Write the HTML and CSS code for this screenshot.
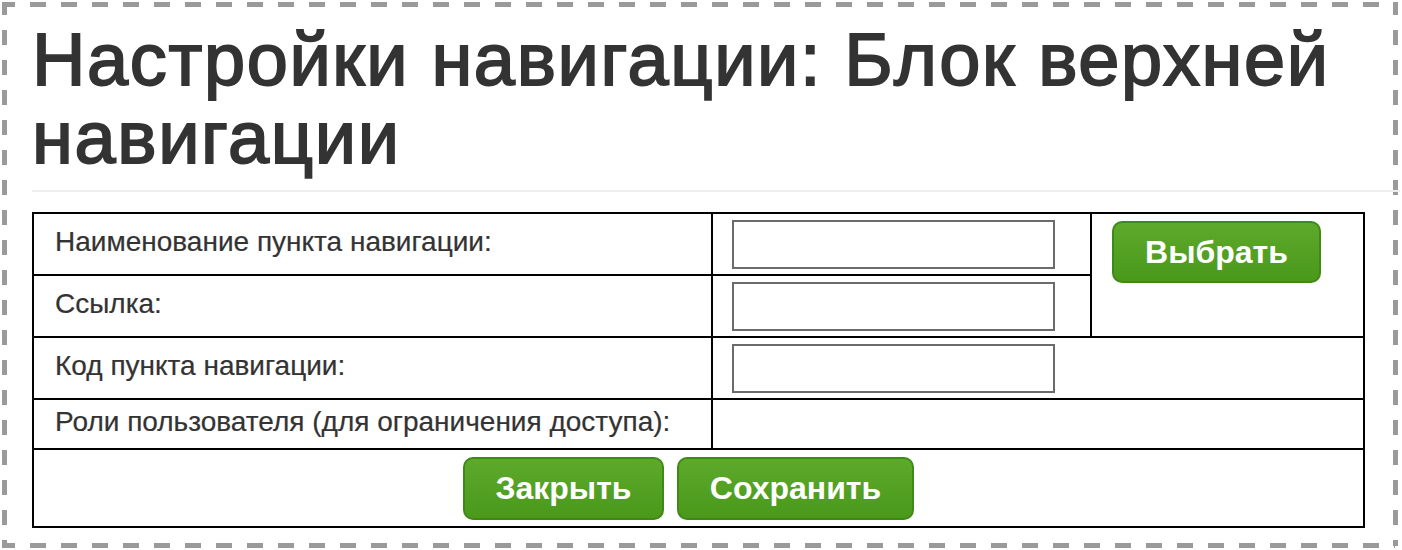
FILE: index.html
```html
<!DOCTYPE html>
<html lang="ru">
<head>
<meta charset="utf-8">
<title>Настройки навигации</title>
<link rel="stylesheet" href="styles.css">
</head>
<body>
<div class="frame">
  <div class="page-header">
    <h1 class="title">Настройки навигации: Блок верхней навигации</h1>
  </div>
  <div class="form-grid">
    <div class="cell label">Наименование пункта навигации:</div>
    <div class="cell field"><input class="text-input" type="text"></div>
    <div class="cell pick"><button class="btn" type="button">Выбрать</button></div>
    <div class="cell label">Ссылка:</div>
    <div class="cell field"><input class="text-input" type="text"></div>
    <div class="cell label">Код пункта навигации:</div>
    <div class="cell field wide"><input class="text-input" type="text"></div>
    <div class="cell label">Роли пользователя (для ограничения доступа):</div>
    <div class="cell wide"></div>
    <div class="cell actions">
      <button class="btn btn-close" type="button">Закрыть</button>
      <button class="btn btn-save" type="button">Сохранить</button>
    </div>
  </div>
</div>
</body>
</html>
```
FILE: styles.css
```css
html, body {
  margin: 0;
  padding: 0;
  background: #fff;
}
body {
  font-family: "Liberation Sans", Arial, sans-serif;
  color: #333;
}
.frame {
  margin: 2px 4px 2px 2px;
  height: 546px;
  box-sizing: border-box;
  padding: 19px 33px 0 30px;
  background-image:
    repeating-linear-gradient(to right, #9a9a9a 0 16px, transparent 16px 31px),
    repeating-linear-gradient(to right, #9a9a9a 0 16px, transparent 16px 31px),
    repeating-linear-gradient(to bottom, #9a9a9a 0 15px, transparent 15px 30px),
    repeating-linear-gradient(to bottom, #9a9a9a 0 15px, transparent 15px 30px);
  background-size: 100% 5px, 100% 5px, 5px 100%, 5px 100%;
  background-position: -3px 0, -3px 100%, 0 -2px, 100% -2px;
  background-repeat: no-repeat;
}
.page-header {
  margin-right: -35px;
  padding-bottom: 13px;
  border-bottom: 2px solid #eee;
}
.title {
  margin: 0;
  font-size: 74px;
  line-height: 78px;
  font-weight: normal;
  letter-spacing: 1.6px;
  -webkit-text-stroke: 1.8px #333;
  color: #333;
}
.form-grid {
  margin-top: 20px;
  display: grid;
  grid-template-columns: 677px 377px 271px;
  grid-template-rows: 60px 60px 60px 48px 76px;
  gap: 2px;
  padding: 2px;
  background: #000;
  width: 1333px;
  box-sizing: border-box;
}
.cell {
  background: #fff;
  box-sizing: border-box;
}
.label {
  display: flex;
  align-items: center;
  padding: 0 21px 4px;
  font-size: 28px;
  line-height: 40px;
  color: #333;
  -webkit-text-stroke: 0.2px #333;
}
.field {
  padding: 6px 19px;
}
.wide {
  grid-column: 2 / 4;
}
.pick {
  grid-column: 3;
  grid-row: 1 / 3;
  padding: 7px 20px;
}
.text-input {
  display: block;
  width: 323px;
  height: 49px;
  box-sizing: border-box;
  margin: 0;
  border: 2px solid #6b6b6b;
  background: #fff;
  padding: 0;
}
.actions {
  grid-column: 1 / 4;
  display: flex;
  justify-content: center;
  gap: 13px;
  padding: 7px 20px 0 0;
}
.btn {
  box-sizing: border-box;
  height: 63px;
  padding: 0;
  border: 2px solid #3f8a16;
  border-radius: 10px;
  background: linear-gradient(#5da92c, #4a991b);
  color: #fff;
  font-family: "Liberation Sans", Arial, sans-serif;
  font-weight: bold;
  font-size: 32px;
  cursor: pointer;
}
.pick .btn {
  width: 209px;
  height: 62px;
}
.btn-close {
  width: 201px;
}
.btn-save {
  width: 237px;
}
```
